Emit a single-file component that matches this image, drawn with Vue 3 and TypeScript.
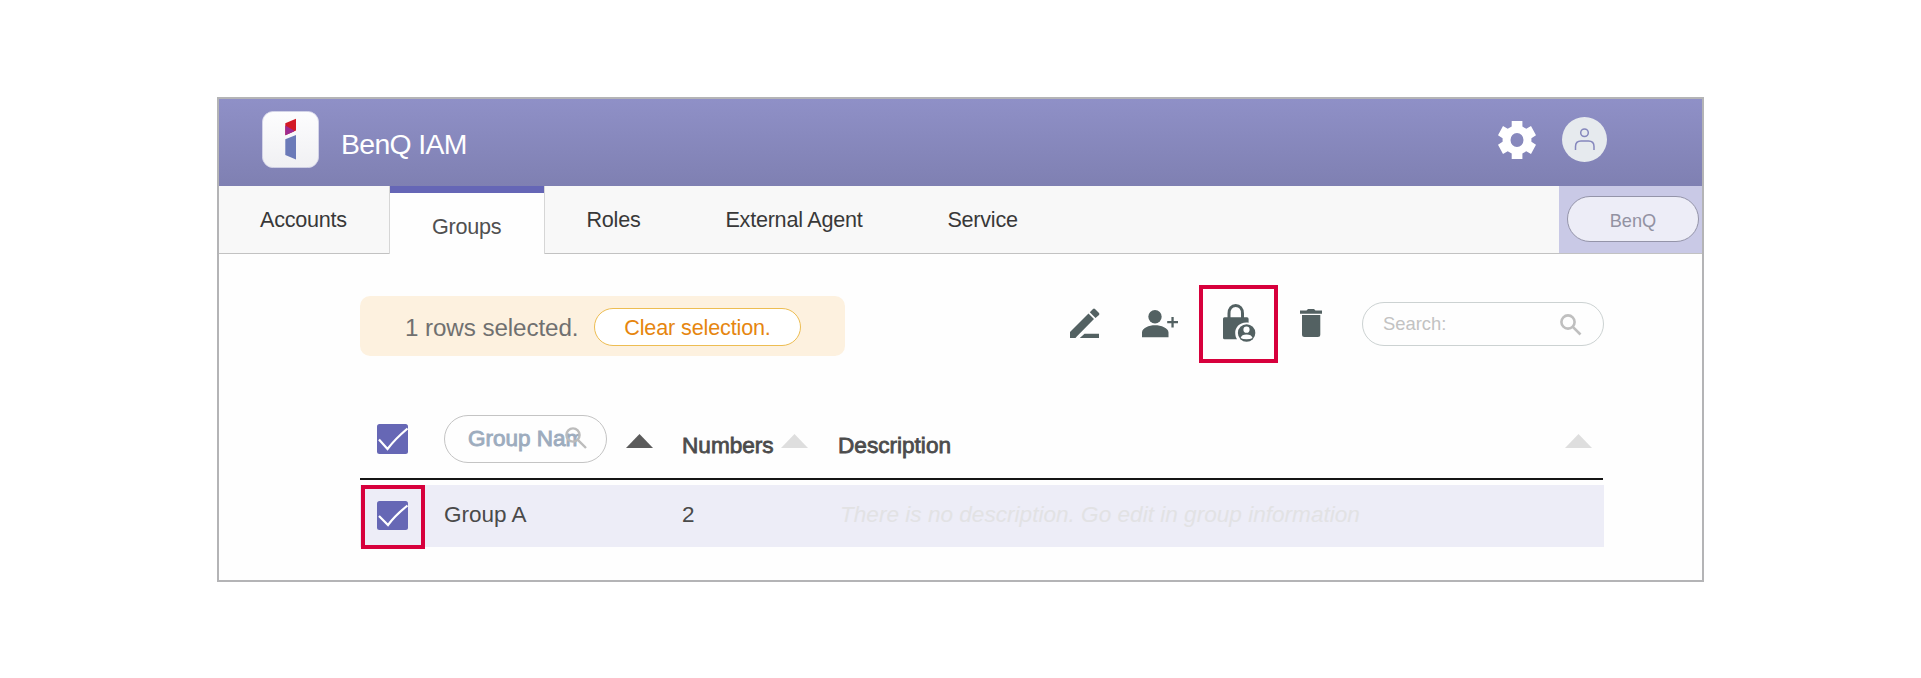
<script setup lang="ts">
import { ref } from 'vue'

interface Tab { name: string; active?: boolean }

const tabs: Tab[] = [
  { name: 'Accounts' },
  { name: 'Groups', active: true },
  { name: 'Roles' },
  { name: 'External Agent' },
  { name: 'Service' },
]
const rows = [{ name: 'Group A', count: 2 }]
const selected = ref(1)
</script>

<template>
  <main class="frame">
    <header class="header">
      <svg class="logo" viewBox="0 0 57 57">
        <defs>
          <linearGradient id="tile" x1="0" y1="0" x2="0" y2="1">
            <stop offset="0" stop-color="#fdfdfe" /><stop offset="1" stop-color="#f0f0f3" />
          </linearGradient>
        </defs>
        <rect x=".4" y=".4" width="56.2" height="56.2" rx="11" fill="url(#tile)" stroke="#d5d5ea" stroke-width=".8" />
        <path d="M23.3 12.3 34 7.8V19.5L23.3 24.2Z" fill="#d31925" />
        <path d="M23.3 14.5 32 19.5V20.4L23.3 24.2Z" fill="#9c2a92" />
        <path d="M23.3 28.2 34 24V48.5L23.3 44Z" fill="#6b7ab8" />
      </svg>
      <h1 class="title">BenQ IAM</h1>
      <svg class="gear" viewBox="0 0 38 38">
        <path fill="#fff" fill-rule="evenodd" d="M13.7 0H24.4V5.6L28.3 7.8 33 5 38 14.3 33.4 17.2V20.8L38 23.7 33 33 28.3 30.3 24.4 32.5V38H13.7V32.5L9.7 30.3 5 33 0 23.7 4.6 20.8V17.2L0 14.3 5 5 9.7 7.8 13.7 5.6ZM19 12A6.5 7 0 1 0 19 26A6.5 7 0 1 0 19 12Z" />
      </svg>
      <svg class="avatar" viewBox="0 0 45 45">
        <circle cx="22.5" cy="22.5" r="22.5" fill="#e6eaee" />
        <g fill="none" stroke="#8587bd" stroke-width="1.5">
          <circle cx="22.5" cy="15.8" r="3.8" />
          <path d="M13.5 33V29.5Q13.5 24 19 24H26.5Q32 24 32 29.5V33" />
        </g>
      </svg>
    </header>

    <nav class="tabs">
      <div v-for="t in tabs" :key="t.name" class="tab" :class="{ active: t.active }">{{ t.name }}</div>
      <div class="tenant"><span class="tenant-pill">BenQ</span></div>
    </nav>

    <section class="toolbar">
      <div class="notice">
        <span class="notice-text">{{ selected }} rows selected.</span>
        <button class="clear">Clear selection.</button>
      </div>
      <svg class="pencil" viewBox="0 0 30 30" fill="#536162">
        <path d="M0 30V24L18.5 5.5 24 11 7 28.2 5.5 30ZM19.8 4.3 23 1Q24 .2 25 1L29 5Q29.800 6 29 7L25.5 9.9ZM14.5 25.8H29V30H9.8Z" />
      </svg>
      <svg class="person" viewBox="0 0 36 28" fill="#536162">
        <circle cx="13" cy="6.7" r="6.7" />
        <path d="M0 27.3V22.5C0 18 7 15.3 13 15.3S26.5 18 26.5 22.5V27.3ZM29.4 7H31.7V11H36V13.3H31.7V17.5H29.4V13.3H25.2V11H29.4Z" />
      </svg>
      <div class="highlight">
        <svg class="lock" viewBox="0 0 33 38" fill="#536162">
          <path d="M6 15V9.5C6 4.8 8.6 1.5 12.7 1.5S19.5 4.8 19.5 9.5V15" fill="none" stroke="#536162" stroke-width="3" />
          <path d="M1.5 13.2H24Q25.6 13.2 25.6 15V18.8C17 17.5 12 23.5 12.2 29 12.3 32 13 33.7 14 35.3H1.5Q0 35.3 0 33.8V14.7Q0 13.2 1.5 13.2Z" />
          <circle cx="23.6" cy="29" r="8.7" />
          <circle cx="23.5" cy="25.7" r="3.1" fill="#fff" />
          <path d="M17.7 34Q18.5 30.6 23.5 30.6T29.5 34Q27.5 35.2 23.5 35.2T17.7 34Z" fill="#fff" />
        </svg>
      </div>
      <svg class="trash" viewBox="0 0 22 28" fill="#536162">
        <path d="M0 1.500H6.500L8 0H14L15.500 1.500H22V4.700H0ZM2 6H20.300V25.500Q20.300 28 17.800 28H4.500Q2 28 2 25.500Z" />
      </svg>
      <div class="search">
        <span>Search:</span>
        <svg class="mag" viewBox="0 0 22 22" fill="none" stroke="#bfbfbf" stroke-width="2.6">
          <circle cx="8" cy="8" r="6.6" /><path d="M12.8 12.8 20.5 20.5" />
        </svg>
      </div>
    </section>

    <section class="table">
      <div class="thead">
        <svg class="check" viewBox="0 0 31 30">
          <rect width="31" height="30" rx="2.5" fill="#6667b5" />
          <path d="M2 15.5 10.500 25Q18 15 30.5 4.5" fill="none" stroke="#fff" stroke-width="2.2" />
        </svg>
        <div class="name-filter">
          <span class="name-text">Group Name</span>
          <svg class="mag" viewBox="0 0 22 22" fill="none" stroke="#bcbcbc" stroke-width="2.4">
            <circle cx="8" cy="8" r="6.6" /><path d="M12.8 12.8 21 21" />
          </svg>
        </div>
        <i class="sort dark"></i>
        <span class="label numbers">Numbers</span>
        <i class="sort"></i>
        <span class="label description">Description</span>
        <i class="sort last"></i>
      </div>
      <div v-for="r in rows" :key="r.name" class="row">
        <div class="marked">
          <svg class="row-check" viewBox="0 0 31 29">
            <rect width="31" height="29" rx="2.5" fill="#6667b5" />
            <path d="M2 15 11 24Q18 14.5 30.5 4.5" fill="none" stroke="#fff" stroke-width="2.2" />
          </svg>
        </div>
        <span class="cell-name">{{ r.name }}</span>
        <span class="cell-count">{{ r.count }}</span>
        <span class="cell-desc">There is no description. Go edit in group information</span>
      </div>
    </section>
  </main>
</template>

<style>
body { background: #fff; }
</style>

<style scoped>
.frame {
  box-sizing: border-box;
  width: 1487px;
  height: 485px;
  margin: 97px 0 0 217px;
  border: 2px solid #b4b4b6;
  background: #fefefe;
  font-family: "Liberation Sans", Arial, sans-serif;
  white-space: nowrap;
  overflow: hidden;
}
svg { display: block; flex: none; }
.header {
  display: flex;
  align-items: flex-start;
  height: 87px;
  background: linear-gradient(#8f90c7, #7f80b2);
}
.logo { width: 57px; height: 57px; margin: 11.5px 0 0 43px; }
.title {
  margin: 30px 0 0 22px;
  font-size: 28.4px;
  letter-spacing: -.65px;
  line-height: 30px;
  font-weight: 400;
  color: #fff;
}
.gear { width: 38px; height: 38px; margin: 22px 26px 0 auto; }
.avatar { width: 45px; height: 45px; margin: 18px 95px 0 0; }

.tabs {
  display: flex;
  height: 68px;
  background: #f8f8f8;
  box-shadow: inset 0 -1px #c2c2c2;
}
.tab {
  padding: 0 42.5px;
  font-size: 21.6px;
  letter-spacing: -.25px;
  line-height: 68px;
  color: #383838;
}
.tab:first-child { box-sizing: border-box; width: 170px; padding: 0 0 0 41px; }
.tab.active {
  box-sizing: border-box;
  width: 156px;
  padding: 0 0 0 42px;
  border: solid #d6d6d6;
  border-width: 0 1px;
  background: linear-gradient(#6566b6 7px, #fefefe 7px);
  color: #505050;
  line-height: 82px;
}
.tab.active + .tab { padding-left: 41.5px; }
.tenant {
  display: flex;
  box-sizing: border-box;
  width: 143px;
  height: 67px;
  margin-left: auto;
  padding: 10px 0 0 8px;
  background: #c9c9e6;
}
.tenant-pill {
  box-sizing: border-box;
  width: 132px;
  height: 46px;
  border: 1px solid #9494a9;
  border-radius: 23px;
  background: #ededf7;
  color: #9292a2;
  font-size: 18.2px;
  line-height: 49px;
  text-align: center;
}

.toolbar {
  display: flex;
  align-items: flex-start;
  box-sizing: border-box;
  height: 109px;
  padding: 31px 0 0 141px;
}
.notice {
  display: flex;
  box-sizing: border-box;
  width: 485px;
  height: 60px;
  margin-top: 11px;
  padding: 12px 0 0 45px;
  border-radius: 10px;
  background: #fdf1df;
}
.notice-text { width: 189px; font-size: 24.2px; letter-spacing: -.08px; line-height: 39px; color: #707070; }
.clear {
  box-sizing: border-box;
  width: 207px;
  height: 38px;
  padding: 0;
  border: 1px solid #edbd52;
  border-radius: 19px;
  background: #fff;
  color: #e6860f;
  font: 21.6px/35px "Liberation Sans", Arial, sans-serif;
  letter-spacing: -.15px;
}
.pencil { width: 30px; height: 30px; margin: 23px 0 0 225px; }
.person { width: 36px; height: 28px; margin: 25px 0 0 42px; }
.highlight {
  box-sizing: border-box;
  width: 79px;
  height: 78px;
  margin-left: 21px;
  padding: 15px 0 0 20px;
  border: 4px solid #d7003c;
}
.lock { width: 33px; height: 38px; }
.trash { width: 22px; height: 28px; margin: 24px 0 0 22px; }
.search {
  display: flex;
  justify-content: space-between;
  box-sizing: border-box;
  width: 242px;
  height: 44px;
  margin: 17px 0 0 40px;
  padding: 0 21px 0 20px;
  border: 1px solid #ccd2d2;
  border-radius: 22px;
  color: #c2c2c2;
  font-size: 18.4px;
  line-height: 42px;
}
.mag { width: 22px; height: 22px; }
.search .mag { margin-top: 11px; }

.table { width: 1244px; margin: 0 0 0 141px; }
.thead {
  display: flex;
  align-items: flex-start;
  box-sizing: border-box;
  width: 1243px;
  height: 85px;
  margin-top: 32px;
  border-bottom: 2px solid #151515;
}
.check { width: 31px; height: 30px; margin: 29px 0 0 17px; }
.name-filter {
  display: flex;
  box-sizing: border-box;
  width: 163px;
  height: 48px;
  margin: 20px 0 0 36px;
  padding: 0 0 0 23px;
  border: 1.5px solid #c4c4c4;
  border-radius: 24px;
}
.name-text {
  width: 112px;
  overflow: hidden;
  font-size: 22.5px;
  line-height: 46px;
  color: #9dacbe;
  -webkit-text-stroke: .9px #9dacbe;
}
.name-filter .mag { margin: 11px 0 0 -15px; }
.sort {
  flex: none;
  width: 27px;
  height: 14px;
  margin-top: 39px;
  clip-path: polygon(50% 0, 100% 100%, 0 100%);
  background: #dedede;
}
.sort.dark { margin-left: 19px; background: #5b5b5b; }
.label {
  margin-top: 38px;
  font-size: 22.6px;
  line-height: 26px;
  color: #4c4c4c;
  -webkit-text-stroke: .8px #4c4c4c;
}
.numbers { width: 99px; margin-left: 29px; }
.description { margin-left: 30px; }
.sort.last { margin-left: auto; margin-right: 11px; }
.row {
  display: flex;
  height: 62px;
  margin-top: 5px;
  background: #ededf7;
  font-size: 22.5px;
  line-height: 59px;
  color: #4a4a4a;
}
.marked {
  box-sizing: border-box;
  flex: none;
  width: 64px;
  height: 64px;
  margin-left: 1px;
  padding: 12px;
  border: 4px solid #d7003c;
}
.row-check { width: 31px; height: 29px; }
.cell-name { width: 238px; margin-left: 19px; }
.cell-count { width: 158px; }
.cell-desc { font-style: italic; font-size: 22.6px; color: #e2e2e4; }
</style>
